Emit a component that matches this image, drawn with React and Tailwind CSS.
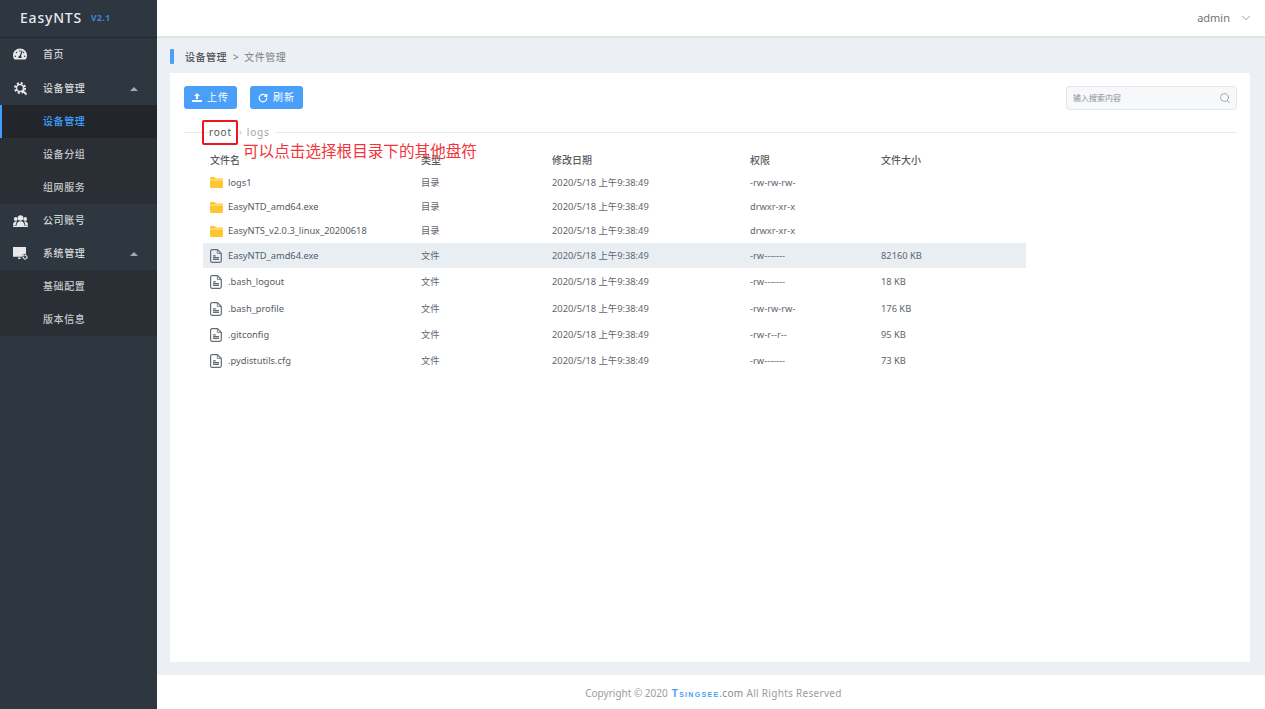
import React from "react";
import { FaTachometerAlt } from "react-icons/fa";
import { ChevronDown, Search, RotateCw } from "lucide-react";

const font = { fontFamily: '"Noto Sans", "Noto Sans CJK SC", sans-serif' };

const files = [
  { name: "logs1", type: "目录", perm: "-rw-rw-rw-", size: "", dir: true, h: "h-[23px] pb-[2px]" },
  { name: "EasyNTD_amd64.exe", type: "目录", perm: "drwxr-xr-x", size: "", dir: true, h: "h-[24px]" },
  { name: "EasyNTS_v2.0.3_linux_20200618", type: "目录", perm: "drwxr-xr-x", size: "", dir: true, h: "h-[24px]" },
  { name: "EasyNTD_amd64.exe", type: "文件", perm: "-rw-------", size: "82160 KB", active: true, h: "h-[25px]" },
  { name: ".bash_logout", type: "文件", perm: "-rw-------", size: "18 KB", h: "h-[28px]" },
  { name: ".bash_profile", type: "文件", perm: "-rw-rw-rw-", size: "176 KB", h: "h-[26px]" },
  { name: ".gitconfig", type: "文件", perm: "-rw-r--r--", size: "95 KB", h: "h-[26px]" },
  { name: ".pydistutils.cfg", type: "文件", perm: "-rw-------", size: "73 KB", h: "h-[26px]" },
];

const FolderIcon = () => (
  <svg width="13" height="11" viewBox="0 0 13 11">
    <path d="M0 1.2C0 .5.5 0 1.2 0h3.3l1.3 1.5h6C12.500 1.500 13 2 13 2.700V9.800C13 10.500 12.500 11 11.800 11H1.200C.5 11 0 10.500 0 9.800z" fill="#fdc82f" />
    <rect x="0" y="2.600" width="13" height="0.800" fill="#fff0b8" />
  </svg>
);

const FileIcon = () => (
  <svg width="12" height="14" viewBox="0 0 12 14" fill="none" stroke="#666c74">
    <path d="M1.900.7h5.600l3.800 3.800v7.300c0 .8-.6 1.500-1.400 1.500H1.900c-.7 0-1.300-.7-1.300-1.500V2.200C.6 1.400 1.200.7 1.900.7z" strokeWidth="1.200" />
    <path d="M7.300.9v3.500h3.700" strokeWidth="0.800" />
    <path d="M3 6.800h2.800M3 8.600h6M3 10.400h6" strokeWidth="1.200" />
  </svg>
);

const GearIcon = () => (
  <svg width="15" height="15" viewBox="0 0 15 15" fill="none" stroke="#e6e8ea">
    <circle cx="7" cy="7" r="4.700" strokeWidth="2.600" strokeDasharray="2 1.700" />
    <circle cx="7" cy="7" r="3.400" strokeWidth="1.300" />
    <path d="M9.500 9.500 13.500 13.500" strokeWidth="2" />
  </svg>
);

const UsersIcon = () => (
  <svg width="15" height="12" viewBox="0 0 15 12" fill="#e6e8ea">
    <circle cx="7.500" cy="3" r="2.800" />
    <circle cx="2.800" cy="4" r="1.900" />
    <circle cx="12.200" cy="4" r="1.900" />
    <path d="M3.500 11c0-3 1.500-4.800 4-4.800s4 1.800 4 4.800z" />
    <path d="M0 10.500C0 8 1 6.500 2.800 6.500c.5 0 .9.100 1.200.3C3 8 2.700 9.200 2.700 10.500zM15 10.500C15 8 14 6.500 12.200 6.500c-.5 0-.9.100-1.200.3 1 1.200 1.300 2.400 1.300 3.700z" />
    <rect x="0" y="10.800" width="15" height="1.200" rx=".5" />
  </svg>
);

const SystemIcon = () => (
  <svg width="15" height="13" viewBox="0 0 15 13" fill="#e6e8ea">
    <path d="M0 0h13v6.800a3.400 3.400 0 0 0-3.800 3H0z" />
    <rect x="5" y="10.500" width="2.500" height="1.500" />
    <circle cx="12" cy="10" r="1.900" fill="none" stroke="#e6e8ea" strokeWidth="1.500" strokeDasharray="1.500 .5" />
  </svg>
);

const Caret = () => (
  <span className="ml-auto mr-[19px] h-0 w-0 border-x-[4px] border-b-[4px] border-x-transparent border-b-[#a4a9ae]" />
);

const MenuItem = ({ icon, label, caret, first }) => (
  <div
    className={`flex items-center text-[10px] font-medium tracking-[0.6px] text-[#d4d6d8] ${
      first ? "h-[34px] pb-[2px]" : "h-[33px]"
    }`}
  >
    <span className="flex w-[43px] justify-center pl-[7px] pr-[10px] text-[14px] text-[#e6e8ea]">{icon}</span>
    {label}
    {caret && <Caret />}
  </div>
);

const SubItem = ({ label, active }) => (
  <div
    className={`flex h-[33px] items-center border-l-2 pl-[41px] text-[10px] font-medium tracking-[0.6px] ${
      active ? "border-[#409eff] bg-[#22262b] text-[#409eff]" : "border-transparent text-[#c4c7ca]"
    }`}
  >
    {label}
  </div>
);

const Sidebar = () => (
  <aside className="flex w-[157px] shrink-0 flex-col bg-[#2e3640]">
    <div className="flex h-[38px] items-center border-b border-[#23282e] pl-[20px] pb-[2px]">
      <span className="text-[14px] font-medium tracking-[0.8px] text-[#e8eaec]">EasyNTS</span>
      <span className="ml-[9px] mt-[2px] text-[8.500px] font-bold tracking-[0.5px] text-[#3f86d8]">V2.1</span>
    </div>
    <MenuItem first icon={<FaTachometerAlt />} label="首页" />
    <MenuItem icon={<GearIcon />} label="设备管理" caret />
    <div className="bg-[#2a2f35]">
      <SubItem label="设备管理" active />
      <SubItem label="设备分组" />
      <SubItem label="组网服务" />
    </div>
    <MenuItem icon={<UsersIcon />} label="公司账号" />
    <MenuItem icon={<SystemIcon />} label="系统管理" caret />
    <div className="bg-[#2a2f35]">
      <SubItem label="基础配置" />
      <SubItem label="版本信息" />
    </div>
  </aside>
);

const UploadIcon = () => (
  <svg width="10" height="9" viewBox="0 0 10 9" fill="#fff">
    <path d="M5 0 8 3H6.100V6H3.900V3H2z" />
    <rect x="0" y="7" width="10" height="2" rx=".4" />
  </svg>
);

const ToolButton = ({ icon, label }) => (
  <button className="flex h-[23px] w-[53px] items-center justify-center gap-[5px] rounded-[3px] bg-[#4a9ff9] text-[10px] tracking-[1px] text-white">
    {icon}
    {label}
  </button>
);

const FileRow = ({ file }) => (
  <div
    className={`grid w-[823px] grid-cols-[218px_131px_198px_131px_1fr] items-center text-[9.300px] text-[#60666d] ${file.h} ${
      file.active ? "bg-[#e9eef3]" : ""
    }`}
  >
    <div className="flex items-center">
      <span className="flex w-[25px] justify-center pl-[1px]">{file.dir ? <FolderIcon /> : <FileIcon />}</span>
      <span className="text-[#555b62]">{file.name}</span>
    </div>
    <span>{file.type}</span>
    <span>2020/5/18 上午9:38:49</span>
    <span>{file.perm}</span>
    <span>{file.size}</span>
  </div>
);

export default function App() {
  return (
    <div className="flex h-screen overflow-hidden bg-[#eceff4]" style={font}>
      <Sidebar />
      <div className="flex min-w-0 flex-1 flex-col">
        <header className="flex h-[38px] shrink-0 items-center justify-end border-b-2 border-[#dfe2e6] bg-white pr-[12px] text-[#70757b]">
          <span className="text-[11px]">admin</span>
          <ChevronDown size={14} strokeWidth={1.2} className="ml-[9px]" />
        </header>

        <div className="flex h-[35px] shrink-0 items-center pl-[13px] pt-[3px] text-[10px] tracking-[0.5px]">
          <span className="-mt-[1px] h-[15px] w-[4px] rounded-[1px] bg-[#4a9ff9]" />
          <span className="ml-[11px] font-medium text-[#4f555b]">设备管理</span>
          <span className="ml-[6px] mr-[5px] text-[#777]">&gt;</span>
          <span className="text-[#777c82]">文件管理</span>
        </div>

        <main className="relative ml-[13px] mr-[15px] h-[589px] shrink-0 bg-white pl-[14px] pr-[13px] pt-[13px]">
          <div className="flex items-start">
            <div className="flex gap-[13px]">
              <ToolButton icon={<UploadIcon />} label="上传" />
              <ToolButton icon={<RotateCw size={10} strokeWidth={3} />} label="刷新" />
            </div>
            <div className="ml-auto flex h-[24px] w-[171px] items-center justify-between rounded-[3px] border border-[#e3e7ec] bg-[#f6f8fa] pl-[6px] pr-[5px] text-[8px] text-[#8a8f95]">
              输入搜索内容
              <Search size={12} strokeWidth={1.2} className="text-[#777]" />
            </div>
          </div>

          <div className="mt-[10px] flex h-[24px] items-center">
            <span className="h-px w-[25px] bg-[#e8eaed]" />
            <span className="text-[10px] tracking-[0.8px] text-[#555]">root</span>
            <span className="ml-[7px] w-[8px] text-[9px] text-[#b5b8bc]">›</span>
            <span className="text-[10px] tracking-[0.8px] text-[#a3a6aa]">logs</span>
            <span className="ml-[5px] h-px flex-1 bg-[#e8eaed]" />
          </div>

          <div className="ml-[19px] mt-[4px]">
            <div className="grid h-[24px] w-[823px] grid-cols-[218px_131px_198px_131px_1fr] items-center text-[10px] font-medium text-[#565c62]">
              <span className="pl-[7px]">文件名</span>
              <span>类型</span>
              <span>修改日期</span>
              <span>权限</span>
              <span>文件大小</span>
            </div>
            {files.map((file, i) => (
              <FileRow key={i} file={file} />
            ))}
          </div>

          {/* annotations drawn on top of the screenshot */}
          <div className="absolute left-[32px] top-[47px] h-[25px] w-[36px] rounded-[2px] border-2 border-[#f0141e]" />
          <span className="absolute left-[73px] top-[66px] whitespace-nowrap text-[15.600px] leading-[24px] text-[#f5333a]">
            可以点击选择根目录下的其他盘符
          </span>
        </main>

        <footer className="mt-[13px] flex flex-1 items-center justify-center bg-white pl-[5px] pt-[3px] text-[10px] text-[#9a9da1]">
          Copyright © 2020
          <span
            className="ml-[4px] text-[10px] font-bold tracking-[1.300px] text-[#4a9ff9] [font-variant:small-caps]"
            style={{ fontFamily: '"Liberation Sans", sans-serif' }}
          >
            Tsingsee
          </span>
          <span className="tracking-[0.3px] text-[#85898d]">.com</span>
          <span className="ml-[3px] tracking-[0.3px]">All Rights Reserved</span>
        </footer>
      </div>
    </div>
  );
}
